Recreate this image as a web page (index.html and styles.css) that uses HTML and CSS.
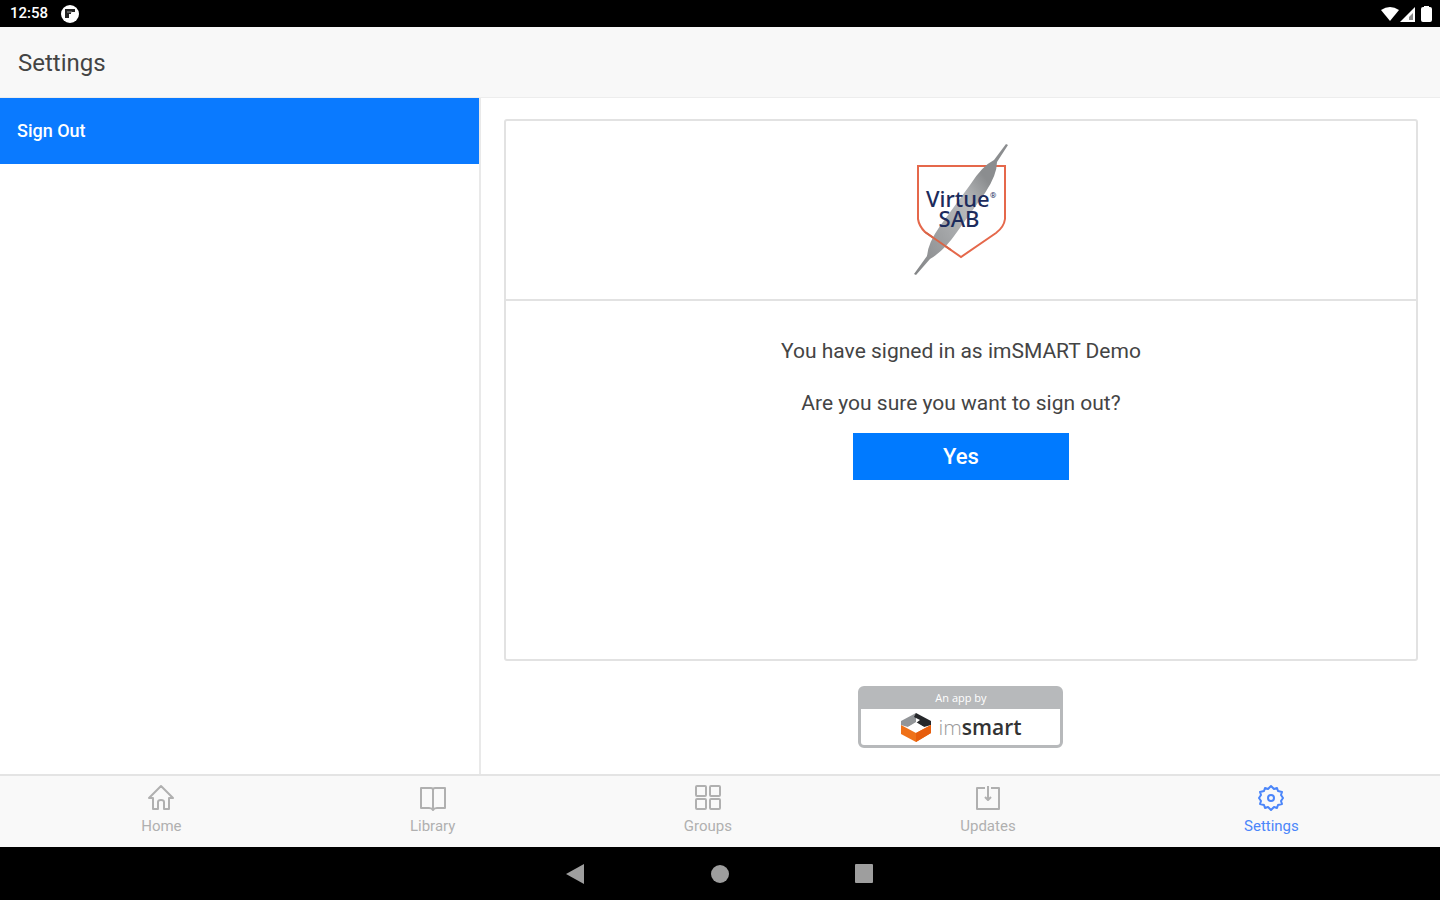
FILE: index.html
```
<!DOCTYPE html>
<html lang="en">
<head>
    <meta charset="UTF-8">
    <meta name="viewport" content="width=device-width, initial-scale=1.0">
    <title>Settings</title>
    <link rel="stylesheet" href="styles.css">
</head>
<body>
    <div class="status-bar">
        <span class="clock">12:58</span>
        <svg class="app-icon" width="18" height="18" viewBox="0 0 18 18">
            <circle cx="9" cy="9" r="9" fill="#fff"/>
            <path d="M4 4h10v3h-4v2H8v4H4z" fill="#222"/>
            <path d="M6 7h5" stroke="#999" stroke-width="1"/>
        </svg>
        <svg class="signal" width="52" height="18" viewBox="0 0 52 18">
            <path d="M1 5Q10-1 19 5L10 16z" fill="#fff"/>
            <path d="M35 2v15H20z" fill="#fff"/>
            <path d="M33 8v7h-4v-3z" fill="#888"/>
            <path d="M43 2h1V1h5v1h1q2 0 2 2v11q0 2-2 2h-7q-2 0-2-2V4q0-2 2-2z" fill="#fff"/>
        </svg>
    </div>

    <header class="header">
        <h1>Settings</h1>
    </header>

    <div class="main">
        <aside class="sidebar">
            <a class="menu-item" href="#">Sign Out</a>
        </aside>

        <main class="content">
            <section class="card">
                <div class="card-logo">
                    <svg width="96" height="134" viewBox="0 0 96 134" role="img" aria-label="Virtue SAB">
                        <defs>
                            <linearGradient id="quill" x1="0" y1="1" x2="1" y2="0">
                                <stop offset="0" stop-color="#828486"/>
                                <stop offset="0.55" stop-color="#b9bbbd"/>
                                <stop offset="0.75" stop-color="#8b8d8f"/>
                            </linearGradient>
                        </defs>
                        <path d="M5 23H92V76Q91 84 83 90L48 114L12 89Q6 83 5 76z" fill="none" stroke="#e5684b" stroke-width="2"/>
                        <path d="M1 131L14 113Q15 100 27 83L57 42Q69 23 81 17L93 1L95 2L84 19Q84 32 72 50L44 89Q31 108 17 116L3 132z" fill="url(#quill)"/>
                        <path d="M12 89L38 107" stroke="#d86547" stroke-width="2"/>
                        <text class="logo-text" x="13" y="64">Virtue</text>
                        <text class="logo-mark" x="77" y="55">®</text>
                        <text class="logo-text" x="46" y="84" text-anchor="middle">SAB</text>
                    </svg>
                </div>
                <div class="card-body">
                    <p>You have signed in as imSMART Demo</p>
                    <p>Are you sure you want to sign out?</p>
                    <button class="yes-button" type="button">Yes</button>
                </div>
            </section>

            <a class="badge" href="#">
                <span class="badge-title">An app by</span>
                <span class="badge-brand">
                    <svg width="32" height="29" viewBox="0 0 32 29">
                        <path d="M16 0L1 8V12L8 14L16 10z" fill="#929598"/>
                        <path d="M16 0L31 8V12L24 14L16 10L20 7L14 4z" fill="#25272a"/>
                        <path d="M1 12L16 20L31 12V20L16 29L1 21z" fill="#ef7118"/>
                        <path d="M16 20L31 12V20L16 29z" fill="#e65d0d"/>
                        <path d="M16 9L24 14L16 19L8 14z" fill="#fff"/>
                    </svg>
                    <span class="brand-name"><span class="brand-light">im</span>smart</span>
                </span>
            </a>
        </main>
    </div>

    <nav class="tab-bar">
        <a class="tab" href="#">
            <svg width="28" height="28" viewBox="0 0 28 28">
                <path d="M2 14L14 2L26 14H22V25H17V18Q17 16 14 16T11 18V25H6V14z"/>
            </svg>
            Home
        </a>
        <a class="tab" href="#">
            <svg width="28" height="28" viewBox="0 0 28 28">
                <path d="M14 26V6Q14 4 12 4H2V24H10Q13 24 14 26Q15 24 18 24H26V4H16Q14 4 14 6"/>
            </svg>
            Library
        </a>
        <a class="tab" href="#">
            <svg width="28" height="28" viewBox="0 0 28 28">
                <rect x="2" y="2" width="10" height="10" rx="1"/>
                <rect x="16" y="2" width="10" height="10" rx="1"/>
                <rect x="2" y="15" width="10" height="10" rx="1"/>
                <rect x="16" y="15" width="10" height="10" rx="1"/>
            </svg>
            Groups
        </a>
        <a class="tab" href="#">
            <svg width="28" height="28" viewBox="0 0 28 28">
                <path d="M11 4H3V25H25V4H17M14 2V16M11 13L14 16L17 13"/>
            </svg>
            Updates
        </a>
        <a class="tab active" href="#">
            <svg width="28" height="28" viewBox="0 0 28 28">
                <path d="M14 2L17 5L20 4L21 7L25 8L24 11L26 14L24 17L25 20L21 21L20 24L17 23L14 26L11 23L8 24L7 21L3 20L4 17L2 14L4 11L3 8L7 7L8 4L11 5z"/>
                <circle cx="14" cy="14" r="3"/>
            </svg>
            Settings
        </a>
    </nav>

    <div class="nav-bar">
        <button type="button" aria-label="Back">
            <svg width="20" height="20" viewBox="0 0 20 20"><path d="M0 10L18 0V20z"/></svg>
        </button>
        <button type="button" aria-label="Home">
            <svg width="20" height="20" viewBox="0 0 20 20"><circle cx="10" cy="10" r="9"/></svg>
        </button>
        <button type="button" aria-label="Recent apps">
            <svg width="20" height="20" viewBox="0 0 20 20"><rect x="1" y="0" width="18" height="19" rx="1"/></svg>
        </button>
    </div>
</body>
</html>
```
FILE: styles.css
```
* {
    box-sizing: border-box;
}
body {
    font-family: Roboto, sans-serif;
    margin: 0;
    min-height: 100vh;
    display: flex;
    flex-direction: column;
    background-color: white;
    color: #444;
}
a {
    text-decoration: none;
}
.status-bar {
    display: flex;
    align-items: center;
    gap: 13px;
    height: 27px;
    padding: 0 8px 0 10px;
    background-color: black;
    color: white;
}
.clock {
    font-size: 15px;
    font-weight: 500;
    line-height: 27px;
}
.signal {
    margin-left: auto;
}
.header {
    display: flex;
    align-items: center;
    height: 71px;
    padding: 2px 18px 0;
    background-color: #f8f8f8;
    border-bottom: 1px solid #ededed;
}
.header h1 {
    margin: 0;
    font-size: 24px;
    font-weight: 400;
}
.main {
    flex: 1;
    display: flex;
}
.sidebar {
    width: calc(100% / 3 + 1px);
    border-right: 2px solid #e9e9e9;
}
.menu-item {
    display: block;
    padding: 20px 17px;
    background-color: #0a7aff;
    color: white;
    font-size: 18px;
    font-weight: 500;
    line-height: 26px;
}
.content {
    flex: 1;
    display: flex;
    flex-direction: column;
    align-items: center;
    padding: 21px 22px 26px 23px;
}
.card {
    flex: 1;
    align-self: stretch;
    margin-bottom: 25px;
    border: 2px solid #e2e2e2;
    border-radius: 3px;
}
.card-logo {
    display: flex;
    justify-content: center;
    padding: 22px 0;
    border-bottom: 2px solid #e2e2e2;
}
.logo-text {
    font-family: "Noto Sans", sans-serif;
    font-size: 22px;
    font-weight: 500;
    fill: #1c2b5c;
}
.logo-mark {
    font-size: 8px;
    fill: #1c2b5c;
}
.card-body {
    display: flex;
    flex-direction: column;
    align-items: center;
    padding-top: 36px;
}
.card-body p {
    margin: 0 0 24px;
    font-size: 21px;
    line-height: 28px;
}
.card-body p + p {
    margin-bottom: 16px;
}
.yes-button {
    width: 216px;
    height: 47px;
    border: none;
    background-color: #007aff;
    color: white;
    font-family: inherit;
    font-size: 22px;
    font-weight: 500;
    cursor: pointer;
}
.badge {
    width: 205px;
    border: 3px solid #b7b9bb;
    border-radius: 6px;
    color: #333;
}
.badge-title {
    display: block;
    background-color: #b7b9bb;
    color: white;
    font-family: "Open Sans", sans-serif;
    font-size: 11px;
    line-height: 18px;
    padding-bottom: 2px;
    text-align: center;
}
.badge-brand {
    display: flex;
    align-items: center;
    justify-content: center;
    gap: 6px;
    height: 36px;
}
.brand-name {
    font-family: "Open Sans", sans-serif;
    font-size: 21px;
    font-weight: 600;
    line-height: 28px;
}
.brand-light {
    font-weight: 300;
    color: #999;
}
.tab-bar {
    display: flex;
    justify-content: space-around;
    height: 73px;
    padding: 8px 27px 0;
    background-color: #f9f9f9;
    border-top: 2px solid #e4e4e4;
}
.tab {
    display: flex;
    flex-direction: column;
    align-items: center;
    gap: 5px;
    color: #b0b0b0;
    font-size: 15px;
    line-height: 18px;
}
.tab svg {
    fill: none;
    stroke: currentColor;
    stroke-width: 2;
    stroke-linejoin: round;
}
.tab.active {
    color: #4b86fa;
}
.nav-bar {
    display: flex;
    align-items: center;
    justify-content: center;
    gap: 124px;
    height: 53px;
    background-color: black;
}
.nav-bar button {
    display: flex;
    padding: 0;
    border: none;
    background: none;
}
.nav-bar svg {
    fill: #9e9e9e;
}
```
